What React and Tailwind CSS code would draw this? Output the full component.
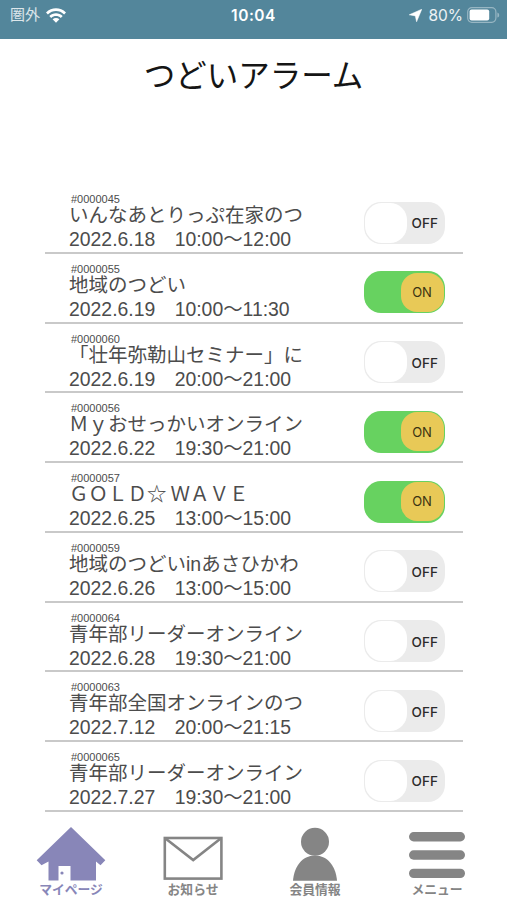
const EVENTS = [
  { id: '#0000045', title: 'いんなあとりっぷ在家のつ', date: '2022.6.18', time: '10:00〜12:00', on: false },
  { id: '#0000055', title: '地域のつどい', date: '2022.6.19', time: '10:00〜11:30', on: true },
  { id: '#0000060', title: '「壮年弥勒山セミナー」に', date: '2022.6.19', time: '20:00〜21:00', on: false },
  { id: '#0000056', title: 'Ｍｙおせっかいオンライン', date: '2022.6.22', time: '19:30〜21:00', on: true },
  { id: '#0000057', title: 'ＧＯＬＤ☆', titleEnd: 'ＷＡＶＥ', date: '2022.6.25', time: '13:00〜15:00', on: true },
  { id: '#0000059', title: '地域のつどいinあさひかわ', date: '2022.6.26', time: '13:00〜15:00', on: false },
  { id: '#0000064', title: '青年部リーダーオンライン', date: '2022.6.28', time: '19:30〜21:00', on: false },
  { id: '#0000063', title: '青年部全国オンラインのつ', date: '2022.7.12', time: '20:00〜21:15', on: false },
  { id: '#0000065', title: '青年部リーダーオンライン', date: '2022.7.27', time: '19:30〜21:00', on: false },
]

function StatusBar() {
  return (
    <header className="grid h-[38.5px] shrink-0 grid-cols-3 items-start bg-[#53869b] pt-[5px] text-white">
      <div className="flex h-5 items-center gap-[6px] pl-[10px]">
        <span className="text-[15px] leading-5 text-white/80">圏外</span>
        <svg width="20" height="15" viewBox="0 0 20 15">
          <path d="M0 4.4C5.6-1.1 14.4-1.1 20 4.4L18.1 6.4C13.5 1.9 6.5 1.9 1.9 6.4Z" fill="currentColor" />
          <path d="M3.3 7.9C7.1 4.3 12.9 4.3 16.7 7.9L14.8 9.9C12 7.3 8 7.3 5.2 9.9Z" fill="currentColor" />
          <path d="M6.6 11.3C8.5 9.6 11.5 9.6 13.4 11.3L10 14.8Z" fill="currentColor" />
        </svg>
      </div>
      <p className="pt-[0.5px] text-center font-[Inter] text-[15.5px] leading-5 font-semibold tracking-[0.5px]">10:04</p>
      <div className="flex h-5 items-center justify-end pr-[7px]">
        <svg width="13" height="13" viewBox="0 0 13 13" className="mr-[6px]">
          <path d="M12.8.2 7.6 12.8 6.3 6.9.2 5.8Z" fill="currentColor" stroke="currentColor" strokeWidth=".5" />
        </svg>
        <span className="mr-[4px] pt-px font-[Inter] text-[15.5px] leading-5 text-white/90">80%</span>
        <svg width="33" height="16" viewBox="0 0 33 16">
          <rect x=".7" y=".7" width="28.2" height="14.6" rx="4.2" fill="none" stroke="#fff" strokeOpacity=".4" strokeWidth="1.2" />
          <rect x="2.6" y="2.6" width="19.6" height="10.8" rx="2" fill="#fff" />
          <path d="M30.4 5.4c2.4.8 2.4 4.4 0 5.2Z" fill="#fff" fillOpacity=".4" />
        </svg>
      </div>
    </header>
  )
}

function Toggle({ on }) {
  return on ? (
    <div className="flex h-[42px] w-[80.5px] justify-end rounded-[17px] bg-[#67d260] py-[1.5px] pr-px">
      <span className="grid w-[43px] place-items-center rounded-[16px] bg-[#e8c957] pt-px font-[Inter] text-[13px] tracking-[-0.2px] text-[#3b3312]">
        ON
      </span>
    </div>
  ) : (
    <div className="flex h-[42px] w-[80.5px] items-stretch rounded-[17px] bg-[#ebebeb] p-px">
      <span className="w-[42px] rounded-[17px] bg-white" />
      <span className="flex-1 self-center pt-[2px] pr-px text-center font-[Inter] text-[13.5px] font-medium text-[#2b2b2b]">
        OFF
      </span>
    </div>
  )
}

function EventRow({ event }) {
  return (
    <li className="flex h-[69.75px] justify-between border-b-2 border-[#c9c9c9] pr-[18.5px] pl-6 text-[#4c4c4c]">
      <div className="whitespace-nowrap pt-[9px]">
        <p className="pl-[2px] text-[11px] leading-3">{event.id}</p>
        <h2 className="h-[21px] text-[19.5px] leading-[21px]">
          {event.title}
          {event.titleEnd && <span className="ml-[4px]">{event.titleEnd}</span>}
        </h2>
        <p className="h-[24px] text-[19.4px] leading-[26px]">
          {event.date}
          {'　'}
          {event.time}
        </p>
      </div>
      <div className="pt-[17.5px]">
        <Toggle on={event.on} />
      </div>
    </li>
  )
}

const TABS = [
  {
    label: 'マイページ',
    tone: 'text-[#8886b8]',
    icon: (
      <svg width="70" height="54" viewBox="0 0 70 54">
        <path
          d="M35 0 69.3 33.3 64.5 38.2 60 34.4V53.5H34.5V39H22.5V53.5H12.5V34.4L5.5 38.2.7 33.3Z"
          fill="currentColor"
        />
        <circle cx="26" cy="46" r="1.6" fill="currentColor" />
      </svg>
    ),
  },
  {
    label: 'お知らせ',
    tone: 'text-[#858585]',
    icon: (
      <svg width="60" height="54" viewBox="0 0 60 54" fill="none" stroke="currentColor" strokeWidth="2.6">
        <rect x="1.8" y="11" width="56.6" height="40.6" />
        <path d="M2.5 11.5 30.2 33 57.7 11.5" />
      </svg>
    ),
  },
  {
    label: '会員情報',
    tone: 'text-[#858585]',
    icon: (
      <svg width="44" height="54" viewBox="0 0 44 54" fill="currentColor">
        <circle cx="22" cy="14.8" r="14" />
        <path d="M0 53.8C1 40 9 28.5 22 28.5S43 40 44 53.8Z" />
      </svg>
    ),
  },
  {
    label: 'メニュー',
    tone: 'text-[#858585]',
    icon: (
      <svg width="56" height="54" viewBox="0 0 56 54" fill="currentColor">
        <rect y="5" width="56" height="9.4" rx="4.7" />
        <rect y="23.3" width="56" height="9.4" rx="4.7" />
        <rect y="41.7" width="56" height="9.4" rx="4.7" />
      </svg>
    ),
  },
]

export default function App() {
  return (
    <div className="flex h-[900px] w-[507px] flex-col overflow-hidden bg-white font-['Liberation_Sans','Noto_Sans_CJK_JP',sans-serif]">
      <StatusBar />
      <h1 className="mt-[15px] h-[44px] text-center text-[31.5px] leading-[44px] text-[#151515]">つどいアラーム</h1>
      <ul className="mt-[86.5px] mr-[44px] ml-[45px] shrink-0">
        {EVENTS.map((event) => (
          <EventRow key={event.id} event={event} />
        ))}
      </ul>
      <nav className="mt-[15px] ml-[10px] grid w-[488px] grid-cols-4">
        {TABS.map((tab) => (
          <button key={tab.label} className={`flex flex-col items-center ${tab.tone}`}>
            {tab.icon}
            <span className="mt-px text-[12.8px] leading-4 font-bold">{tab.label}</span>
          </button>
        ))}
      </nav>
    </div>
  )
}
